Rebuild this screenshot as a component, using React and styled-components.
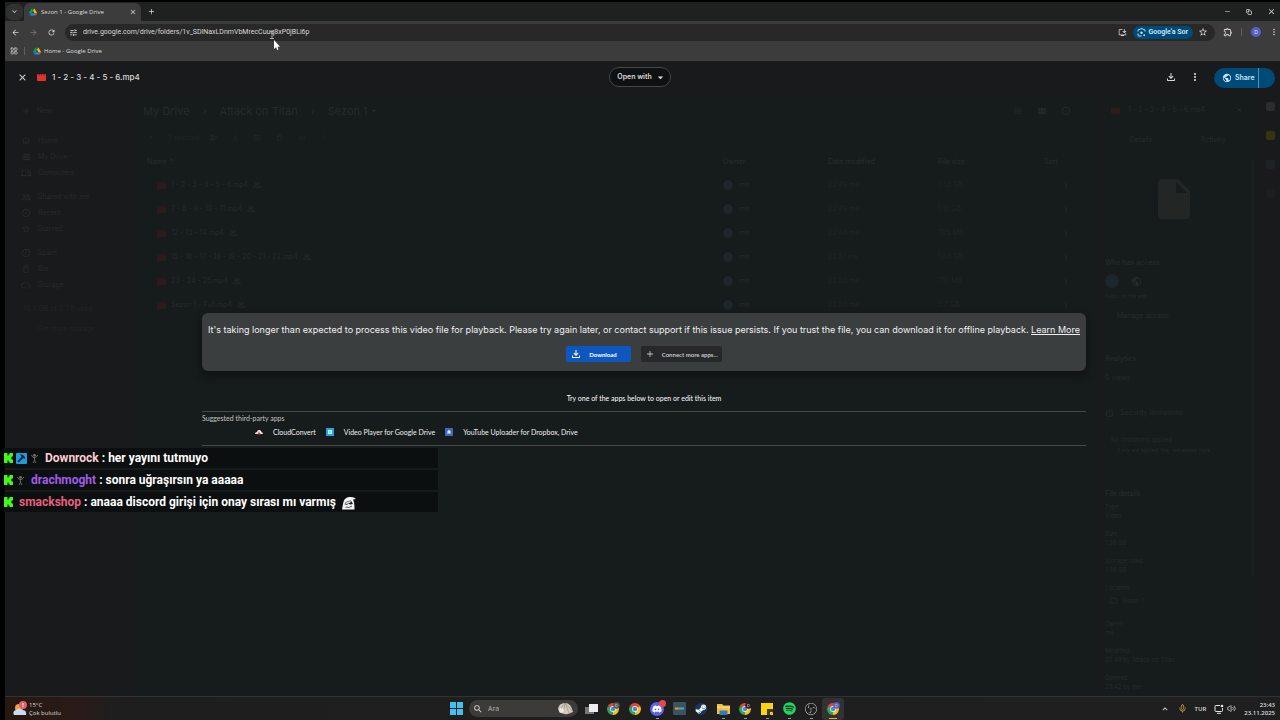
import React from "react";
import styled, { createGlobalStyle, css } from "styled-components";
import {
  MdAdd,
  MdArrowBack,
  MdArrowDropDown,
  MdArrowForward,
  MdClose,
  MdDeleteOutline,
  MdDriveFileMoveOutline,
  MdErrorOutline,
  MdInfoOutline,
  MdInsertDriveFile,
  MdKeyboardArrowDown,
  MdKeyboardArrowUp,
  MdLink,
  MdMenu,
  MdMoreVert,
  MdOutlineCloud,
  MdOutlineDevices,
  MdOutlineExtension,
  MdOutlineFileDownload,
  MdOutlineFolder,
  MdOutlineHome,
  MdOutlineInstallDesktop,
  MdOutlinePeopleAlt,
  MdOutlineStorage,
  MdPersonAddAlt1,
  MdPublic,
  MdRefresh,
  MdSchedule,
  MdSearch,
  MdStarBorder,
  MdTune,
  MdViewModule,
} from "react-icons/md";
import { FaDiscord, FaSpotify, FaSteamSymbol } from "react-icons/fa";
import { SiObsstudio } from "react-icons/si";
import { Copy, LayoutGrid, Mic, Minus, Volume2 } from "lucide-react";

const colors = {
  strip: "#1f2121",
  toolbar: "#3c3c3c",
  omnibox: "#282828",
  page: "#181a1b",
  panel: "#161b1b",
  faint: "#272b2c",
  fainter: "#212627",
  faintRed: "#2e1b1c",
  blue: "#004a77",
};

const fonts = {
  system: `"Open Sans", "Noto Sans", sans-serif`,
  drive: `Inter, "Liberation Sans", sans-serif`,
  compact: `Lato, "Liberation Sans", sans-serif`,
  button: `"Liberation Sans", Arial, sans-serif`,
  chat: `Roboto, "Liberation Sans", sans-serif`,
};

const navGroups = [
  [
    [MdOutlineHome, "Home"],
    [MdOutlineStorage, "My Drive"],
    [MdOutlineDevices, "Computers"],
  ],
  [
    [MdOutlinePeopleAlt, "Shared with me"],
    [MdSchedule, "Recent"],
    [MdStarBorder, "Starred"],
  ],
  [
    [MdErrorOutline, "Spam"],
    [MdDeleteOutline, "Bin"],
    [MdOutlineCloud, "Storage"],
  ],
];

const files = [
  ["1 - 2 - 3 - 4 - 5 - 6.mp4", "22:49 me", "1.38 GB"],
  ["7 - 8 - 9 - 10 - 11.mp4", "22:49 me", "1.15 GB"],
  ["12 - 13 - 14.mp4", "22:48 me", "705 MB"],
  ["15 - 16 - 17 - 18 - 19 - 20 - 21 - 22.mp4", "22:51 me", "1.84 GB"],
  ["23 - 24 - 25.mp4", "22:50 me", "710 MB"],
  ["Sezon 1 - Full.mp4", "22:50 me", "5.7 GB"],
];

const details = [
  ["Type", "Video"],
  ["Size", "1.38 GB"],
  ["Storage used", "1.38 GB"],
];

const laterDetails = [
  ["Owner", "me"],
  ["Modified", "22:49 by Attack on Titan"],
  ["Opened", "23:42 by me"],
];

const messages = [
  { user: "Downrock", color: "#ffccd5", pick: true, sprite: true, text: "her yayını tutmuyo" },
  { user: "drachmoght", color: "#a35bea", sprite: true, text: "sonra uğraşırsın ya aaaaa" },
  {
    user: "smackshop",
    color: "#e9607c",
    text: "anaaa discord girişi için onay sırası mı varmış",
    emote: true,
  },
];

const DriveLogo = ({ size = 9 }) => (
  <svg width={size} height={size} viewBox="0 0 87.3 78" aria-hidden="true">
    <path
      d="m6.6 66.85 3.85 6.65c.8 1.4 1.95 2.5 3.3 3.3l13.75-23.8h-27.5c0 1.55.4 3.1 1.2 4.5z"
      fill="#0066da"
    />
    <path
      d="m43.65 25-13.75-23.8c-1.35.8-2.5 1.9-3.3 3.3l-25.4 44a9.06 9.06 0 0 0 -1.2 4.5h27.5z"
      fill="#00ac47"
    />
    <path
      d="m73.55 76.8c1.35-.8 2.5-1.9 3.3-3.3l1.6-2.75 7.65-13.25c.8-1.4 1.2-2.95 1.2-4.5h-27.5l5.85 11.5z"
      fill="#ea4335"
    />
    <path
      d="m43.65 25 13.75-23.8c-1.35-.8-2.9-1.2-4.5-1.2h-18.5c-1.6 0-3.15.45-4.5 1.2z"
      fill="#00832d"
    />
    <path
      d="m59.8 53h-32.3l-13.75 23.8c1.35.8 2.9 1.2 4.5 1.2h50.8c1.6 0 3.15-.45 4.5-1.2z"
      fill="#2684fc"
    />
    <path
      d="m73.4 26.5-12.7-22c-.8-1.4-1.95-2.5-3.3-3.3l-13.75 23.8 16.15 28h27.45c0-1.55-.4-3.1-1.2-4.5z"
      fill="#ffba00"
    />
  </svg>
);

const VideoIcon = ({ color = "#e0352b", notch = "#181a1b" }) => (
  <svg width="9" height="9" viewBox="0 0 9 9" aria-hidden="true">
    <rect y="1" width="9" height="7" rx="1" fill={color} />
    <path d="M2 1v1.4M4.5 1v1.4M7 1v1.4" stroke={notch} strokeWidth="0.8" />
  </svg>
);

const ChromeIcon = ({ badge }) => (
  <svg width="14" height="14" viewBox="0 0 14 14" aria-hidden="true">
    <path d="M7 7 1.8 4A6 6 0 0 1 12.2 4z" fill="#e94335" />
    <path d="M7 7 12.2 4A6 6 0 0 1 7 13z" fill="#fbc116" />
    <path d="M7 7v6A6 6 0 0 1 1.8 4z" fill="#34a353" />
    <circle cx="7" cy="7" r="2.9" fill="#f3f3f3" />
    <circle cx="7" cy="7" r="2.2" fill="#4285f4" />
    {badge && <circle cx="10.5" cy="3.5" r="3.2" fill={badge} />}
    {badge && <path d="M9.5 2.2v2.6q2.2 0 2.2-1.3T9.5 2.2" fill="none" stroke="#bbb" strokeWidth="0.6" />}
  </svg>
);

const KickBadge = () => (
  <svg width="9" height="10" viewBox="0 0 9 10" aria-hidden="true">
    <path d="M0 0h3.5v2.5h1V1.2h1V0H9v3.5H7.8v1H7v1h.8v1H9V10H5.5V8.8h-1V7.5h-1V10H0z" fill="#45f51d" />
  </svg>
);

const PickBadge = () => (
  <svg width="11" height="11" viewBox="0 0 11 11" aria-hidden="true">
    <rect width="11" height="11" rx="1" fill="#1f9be0" />
    <path d="M4 1.6Q8.500 1 9.300 6.200L7.700 4.900 6.300 6 2.600 9.600 1.300 8.300 5 4.700 5.500 3.300z" fill="#0b2437" />
  </svg>
);

const SpriteBadge = () => (
  <svg width="9" height="11" viewBox="0 0 9 11" aria-hidden="true">
    <circle cx="4.5" cy="2.3" r="1.4" fill="#77716c" />
    <path d="M1.4 2 3 4.4h3L7.8 2M4.5 4v3.2L3.2 10M4.5 7.2 5.9 10" fill="none" stroke="#6d6762" />
  </svg>
);

const EmoteIcon = () => (
  <svg width="14" height="16" viewBox="0 0 14 16" aria-hidden="true">
    <path d="M0 15.500 1 10Q1.500 4 7 3q5-.6 7 2l-3 .6q1.600 3 1.500 9.900z" fill="#f4f4f4" />
    <path d="M2.500 10.300Q3.500 7 9 6.600L11 10Q8 11 6.600 9.800 5 11.200 2.500 10.300z" fill="#202020" />
    <path d="M3.500 13q3.500 1.500 6.500-1" stroke="#333" strokeWidth=".8" fill="none" />
    <path d="M3 10.200Q5 7 9.600 7.400L7 9.300z" fill="#f4f4f4" />
  </svg>
);

const GoogleLens = () => (
  <svg width="9" height="9" viewBox="0 0 9 9" fill="none" stroke="#c2e7ff" aria-hidden="true">
    <path d="M1 3.500V2.500Q1 1.500 2 1.500h1l.6-.8h2l.6.8h.8q1 0 1 1v1M1 5.500V7q0 1 1 1h2.500" />
    <circle cx="4.500" cy="4.700" r="1.200" fill="#c2e7ff" stroke="none" />
    <circle cx="7.200" cy="7.200" r=".9" fill="#c2e7ff" stroke="none" />
  </svg>
);

const NetworkIcon = () => (
  <svg width="10" height="10" viewBox="0 0 10 10" fill="none" stroke="#e4e4e4" aria-hidden="true">
    <path d="M6 1.500H2q-1 0-1 1v4q0 1 1 1h5.500q1 0 1-1V4M3 9.300h4" />
    <circle cx="8" cy="2" r="1.300" fill="#e4e4e4" stroke="none" />
  </svg>
);

const WindowsIcon = () => (
  <svg width="13" height="13" viewBox="0 0 13 13" aria-hidden="true">
    <path d="M0 0h6v6H0zM7 0h6v6H7zM0 7h6v6H0zM7 7h6v6H7z" fill="#43bff0" />
  </svg>
);

const TaskViewIcon = () => (
  <svg width="13" height="12" viewBox="0 0 13 12" aria-hidden="true">
    <rect y="4" width="9" height="7" fill="#777" />
    <rect x="4" y="1" width="9" height="8" fill="#eeeeee" />
  </svg>
);

const ShellIcon = () => (
  <svg width="17" height="13" viewBox="0 0 17 13" aria-hidden="true">
    <path d="M1 7Q2 1 8 1q6 0 8 9l-5 2Q3 13 1 7z" fill="#d3cabd" />
    <path d="M8 1 6 12M8 1l4 10M8 1 2 9M8 1l7 8" stroke="#958b7c" strokeWidth=".6" />
    <circle cx="4.500" cy="8.500" r="2.500" fill="#eee6d8" />
  </svg>
);

const DiscordIcon = () => (
  <BadgeHolder>
    <svg width="14" height="14" viewBox="0 0 14 14" aria-hidden="true">
      <circle cx="7" cy="7" r="7" fill="#5865f2" />
      <FaDiscord x="2" y="2" size={10} color="#ffffff" />
    </svg>
    <RedBadge />
  </BadgeHolder>
);

const DeckIcon = () => (
  <svg width="13" height="13" viewBox="0 0 13 13" aria-hidden="true">
    <rect width="13" height="13" rx="1" fill="#3b5361" />
    <path d="M2 6.500h3" stroke="#e79a3b" strokeWidth="2" />
    <path d="M5 6.500h3" stroke="#57b86b" strokeWidth="2" />
    <path d="M8 6.500h3" stroke="#4aa3df" strokeWidth="2" />
  </svg>
);

const SteamIcon = () => (
  <svg width="12" height="12" viewBox="0 0 12 12" aria-hidden="true">
    <circle cx="6" cy="6" r="6" fill="#14395f" />
    <FaSteamSymbol x="0" y="0" size={12} color="#ffffff" />
  </svg>
);

const FolderIcon = () => (
  <svg width="13" height="12" viewBox="0 0 13 12" aria-hidden="true">
    <path d="M0 1h5l1.500 1.500H13V11H0z" fill="#f5bf42" />
    <path d="M0 3.500h13V5H0z" fill="#ffd975" />
    <path d="M2.500 7.500h8V12h-8z" fill="#2c7cc4" />
  </svg>
);

const NotesIcon = () => (
  <svg width="12" height="12" viewBox="0 0 12 12" aria-hidden="true">
    <path d="M0 0h12v12H0z" fill="#fcd116" />
    <path d="M6 6h6v3l-3 3H6z" fill="#413c26" />
    <path d="M9 12V9h3z" fill="#fcd116" />
  </svg>
);

const WeatherIcon = () => (
  <svg width="14" height="15" viewBox="0 0 14 15" aria-hidden="true">
    <circle cx="6" cy="7" r="4" fill="#efa23b" />
    <path d="M1 14q-2-4 2-5 3-3 6 0 5 0 4 5z" fill="#c7dcf4" />
    <circle cx="10" cy="4" r="4" fill="#e0606a" />
    <path d="M10 2v2.500M10 5.300v.9" stroke="#fff" />
  </svg>
);

const taskbarApps = [
  { name: "Task view", icon: <TaskViewIcon /> },
  { name: "Chrome profile", icon: <ChromeIcon badge="#4b5b50" /> },
  { name: "Chrome", icon: <ChromeIcon /> },
  { name: "Discord", icon: <DiscordIcon />, open: true },
  { name: "Deck", icon: <DeckIcon /> },
  { name: "Steam", icon: <SteamIcon /> },
  { name: "Files", icon: <FolderIcon />, open: true },
  { name: "Chrome stream", icon: <ChromeIcon badge="#201c1c" />, open: true },
  { name: "Sticky notes", icon: <NotesIcon />, open: true },
  { name: "Spotify", icon: <FaSpotify size={13} color="#1ed760" />, open: true },
  { name: "OBS", icon: <SiObsstudio size={12} color="#c9c9c9" />, open: true },
  { name: "Chrome drive", icon: <ChromeIcon badge="#5661c4" />, active: true },
];

const App = () => (
  <Screen>
    <GlobalStyle />
    <BrowserChrome />
    <DrivePage>
      <DriveBackground />
      <Viewer />
    </DrivePage>
    <Taskbar />
    <Chat />
    <Cursor width="11" height="20" viewBox="0 0 11 20" aria-hidden="true">
      <path d="M0 .5h4M2 .5v7M0 7.500h4" stroke="#a9a9a9" fill="none" />
      <path d="M4 9v9l2-1.800L7.300 19l1.200-.5L7.500 15.800H10z" fill="#ffffff" />
    </Cursor>
  </Screen>
);

const BrowserChrome = () => (
  <header>
    <TabStrip>
      <IconButton $round aria-label="Search tabs">
        <MdKeyboardArrowDown size={9} />
      </IconButton>
      <Tab>
        <DriveLogo size={8} />
        <TabTitle>Sezon 1 - Google Drive</TabTitle>
        <IconButton $small aria-label="Close tab">
          <MdClose size={8} />
        </IconButton>
      </Tab>
      <IconButton aria-label="New tab">
        <MdAdd size={9} />
      </IconButton>
      <WindowControls>
        <IconButton aria-label="Minimize">
          <Minus size={7} />
        </IconButton>
        <IconButton aria-label="Restore">
          <Copy size={6} strokeWidth={3} />
        </IconButton>
        <IconButton aria-label="Close window">
          <MdClose size={9} />
        </IconButton>
      </WindowControls>
    </TabStrip>
    <Toolbar>
      <IconButton aria-label="Back">
        <MdArrowBack size={9} />
      </IconButton>
      <IconButton $dim aria-label="Forward">
        <MdArrowForward size={9} />
      </IconButton>
      <IconButton aria-label="Reload">
        <MdRefresh size={9} />
      </IconButton>
      <Omnibox>
        <IconButton $small aria-label="Site information">
          <MdTune size={9} />
        </IconButton>
        <Url
          aria-label="Address"
          defaultValue="drive.google.com/drive/folders/1v_SDlNaxLDnmVbMrecCuuq8xP0jBLi6p"
        />
        <IconButton $small aria-label="Install">
          <MdOutlineInstallDesktop size={9} />
        </IconButton>
        <LensButton>
          <GoogleLens />
          Google'a Sor
        </LensButton>
        <IconButton $small aria-label="Bookmark">
          <MdStarBorder size={10} />
        </IconButton>
      </Omnibox>
      <IconButton aria-label="Extensions">
        <MdOutlineExtension size={10} />
      </IconButton>
      <Separator />
      <Profile aria-label="Profile">D</Profile>
      <IconButton $small aria-label="Menu">
        <MdMoreVert size={10} />
      </IconButton>
    </Toolbar>
    <BookmarkBar>
      <IconButton $small aria-label="Apps">
        <LayoutGrid size={8} />
      </IconButton>
      <Separator />
      <Bookmark href="#home">
        <DriveLogo size={8} />
        Home - Google Drive
      </Bookmark>
    </BookmarkBar>
  </header>
);

const DriveBackground = () => (
  <Background>
    <Sidebar>
      <NewButton>
        <MdAdd size={10} /> New
      </NewButton>
      {navGroups.map((group, i) => (
        <NavGroup key={i}>
          {group.map(([Icon, label]) => (
            <NavLink href="#nav" key={label}>
              <Icon size={10} /> {label}
            </NavLink>
          ))}
        </NavGroup>
      ))}
      <StorageText>10.4 GB of 2 TB used</StorageText>
      <StorageText $indent>Get more storage</StorageText>
    </Sidebar>
    <Main>
      <Breadcrumbs>
        <span>My Drive</span>
        <Chevron>›</Chevron>
        <span>Attack on Titan</span>
        <Chevron>›</Chevron>
        <Crumb>
          Sezon 1 <MdArrowDropDown size={12} />
        </Crumb>
        <ViewIcons>
          <MdMenu size={10} />
          <MdViewModule size={10} />
          <MdInfoOutline size={10} />
        </ViewIcons>
      </Breadcrumbs>
      <Selection>
        <MdClose size={8} />
        <SelectionText>1 selected</SelectionText>
        <MdPersonAddAlt1 size={9} />
        <MdOutlineFileDownload size={9} />
        <MdDriveFileMoveOutline size={9} />
        <MdDeleteOutline size={9} />
        <MdLink size={9} />
        <MdMoreVert size={9} />
      </Selection>
      <FileTable>
        <thead>
          <tr>
            <HeadCell>Name ↑</HeadCell>
            <HeadCell $width={105}>Owner</HeadCell>
            <HeadCell $width={110}>Date modified</HeadCell>
            <HeadCell $width={106}>File size</HeadCell>
            <HeadCell $width={37}>Sort</HeadCell>
          </tr>
        </thead>
        <tbody>
          {files.map(([name, date, size]) => (
            <tr key={name}>
              <Cell>
                <FileName>
                  <VideoIcon color={colors.faintRed} notch={colors.panel} />
                  {name}
                  <MdOutlinePeopleAlt size={8} />
                </FileName>
              </Cell>
              <Cell>
                <Owner>
                  <OwnerDot />
                  me
                </Owner>
              </Cell>
              <Cell $dim>{date}</Cell>
              <Cell $dim>{size}</Cell>
              <Cell $end>
                <MdMoreVert size={8} />
              </Cell>
            </tr>
          ))}
        </tbody>
      </FileTable>
    </Main>
    <Details>
      <DetailsHead>
        <VideoIcon color={colors.faintRed} notch={colors.panel} />
        <DetailsTitle>1 - 2 - 3 - 4 - 5 - 6.mp4</DetailsTitle>
        <MdClose size={8} />
      </DetailsHead>
      <DetailsTabs>
        <span>Details</span>
        <span>Activity</span>
      </DetailsTabs>
      <Preview>
        <MdInsertDriveFile size={48} />
      </Preview>
      <DetailsHeading>Who has access</DetailsHeading>
      <Avatars>
        <AvatarDot />
        <MdPublic size={11} />
      </Avatars>
      <AccessNote>Public on the web</AccessNote>
      <ManageAccess>Manage access</ManageAccess>
      <DetailsHeading>Analytics</DetailsHeading>
      <Views>0 views</Views>
      <Security>
        <MdErrorOutline size={9} /> Security limitations
      </Security>
      <Limits>
        No limitations applied
        <LimitNote>If any are applied, they will appear here</LimitNote>
      </Limits>
      <DetailsHeading>File details</DetailsHeading>
      <DetailList>
        {details.map(([term, value]) => (
          <Detail key={term}>
            <dt>{term}</dt>
            <dd>{value}</dd>
          </Detail>
        ))}
        <Detail $tall>
          <dt>Location</dt>
          <LocationChip>
            <MdOutlineFolder size={9} /> Sezon 1
          </LocationChip>
        </Detail>
        {laterDetails.map(([term, value]) => (
          <Detail key={term}>
            <dt>{term}</dt>
            <dd>{value}</dd>
          </Detail>
        ))}
      </DetailList>
    </Details>
    <Scrollbar />
    <Rail>
      <RailDot $color="#2b2e2f" />
      <RailDot $color="#34350f" />
      <RailDot $color="#1d2225" />
      <RailDot $color="#1c1f20" />
    </Rail>
  </Background>
);

const Viewer = () => (
  <ViewerLayer>
    <ViewerBar>
      <ViewerTitle>
        <IconButton aria-label="Close viewer">
          <MdClose size={11} />
        </IconButton>
        <VideoIcon />
        <h1>1 - 2 - 3 - 4 - 5 - 6.mp4</h1>
      </ViewerTitle>
      <OpenWith>
        Open with <MdArrowDropDown size={13} />
      </OpenWith>
      <ViewerActions>
        <IconButton $large aria-label="Download">
          <MdOutlineFileDownload size={12} />
        </IconButton>
        <IconButton $large aria-label="More actions">
          <MdMoreVert size={12} />
        </IconButton>
        <Share>
          <ShareMain>
            <MdPublic size={10} /> Share
          </ShareMain>
          <ShareMore aria-label="Share options" />
        </Share>
      </ViewerActions>
    </ViewerBar>
    <ViewerBody>
      <Notice>
        <p>
          It's taking longer than expected to process this video file for playback. Please try
          again later, or contact support if this issue persists. If you trust the file, you can
          download it for offline playback. <LearnMore href="#help">Learn More</LearnMore>
        </p>
        <NoticeActions>
          <NoticeButton $primary>
            <MdOutlineFileDownload size={12} />
            <NoticeLabel>Download</NoticeLabel>
          </NoticeButton>
          <NoticeButton>
            <MdAdd size={10} />
            <NoticeLabel>Connect more apps...</NoticeLabel>
          </NoticeButton>
        </NoticeActions>
      </Notice>
      <TryText>Try one of the apps below to open or edit this item</TryText>
      <Suggested>
        <SuggestedTitle>Suggested third-party apps</SuggestedTitle>
        <SuggestedApps>
          <AppLink href="#cloudconvert">
            <svg width="8" height="8" viewBox="0 0 8 8" aria-hidden="true">
              <path d="M0 6q0-2 2-2 .5-2.500 2.500-2T6.500 4Q8 4.500 8 6z" fill="#f3dede" />
              <path d="M2 6.500 4 4l2 2.500z" fill="#b9434c" />
            </svg>
            CloudConvert
          </AppLink>
          <AppLink href="#videoplayer">
            <svg width="8" height="8" viewBox="0 0 8 8" aria-hidden="true">
              <path d="M0 0h8v8H0z" fill="#24a5dd" />
              <path d="M2 2h4v4H2z" fill="#d5f2ff" />
              <path d="M3.500 3v2l1.500-1z" fill="#24a5dd" />
            </svg>
            Video Player for Google Drive
          </AppLink>
          <AppLink href="#uploader">
            <svg width="8" height="8" viewBox="0 0 8 8" aria-hidden="true">
              <path d="M0 0h8v8H0z" fill="#3e68bd" />
              <path d="M4 1.800 6 4H5.200l1 1.500H1.800L2.800 4H2z" fill="#e6ecf8" />
            </svg>
            YouTube Uploader for Dropbox, Drive
          </AppLink>
        </SuggestedApps>
      </Suggested>
    </ViewerBody>
  </ViewerLayer>
);

const Chat = () => (
  <ChatList>
    {messages.map(message => (
      <Message key={message.user}>
        <KickBadge />
        {message.pick && <PickBadge />}
        {message.sprite && <SpriteBadge />}
        <p>
          <UserName $color={message.color}>{message.user}</UserName> : {message.text}
        </p>
        {message.emote && <EmoteIcon />}
      </Message>
    ))}
  </ChatList>
);

const Taskbar = () => (
  <Bar>
    <Weather>
      <WeatherIcon />
      <div>
        <p>15°C</p>
        <p>Çok bulutlu</p>
      </div>
    </Weather>
    <BarApps>
      <BarButton aria-label="Start">
        <WindowsIcon />
      </BarButton>
      <BarSearch>
        <MdSearch size={10} />
        <BarInput aria-label="Ara" placeholder="Ara" />
        <ShellIcon />
      </BarSearch>
      {taskbarApps.map(({ name, icon, open, active }) => (
        <BarButton key={name} aria-label={name} $open={open} $active={active}>
          {icon}
        </BarButton>
      ))}
    </BarApps>
    <Tray>
      <MdKeyboardArrowUp size={10} />
      <Mic size={9} color="#d9a43b" />
      <span>TUR</span>
      <TrayGroup>
        <NetworkIcon />
        <Volume2 size={9} />
      </TrayGroup>
      <Clock>
        <p>23:43</p>
        <p>23.11.2025</p>
      </Clock>
    </Tray>
  </Bar>
);

const GlobalStyle = createGlobalStyle`
  * {
    box-sizing: border-box;
  }
  body {
    margin: 0;
    background: #000000;
  }
  h1, p, dl, dd, ul {
    margin: 0;
    padding: 0;
  }
  button, input {
    border: 0;
    padding: 0;
    margin: 0;
    background: none;
    color: inherit;
    font: inherit;
    outline: none;
  }
  a {
    color: inherit;
    text-decoration: none;
  }
  svg {
    flex: none;
    display: block;
  }
`;

const row = css`
  display: flex;
  align-items: center;
`;

const Screen = styled.div`
  position: relative;
  display: flex;
  flex-direction: column;
  height: 100vh;
  padding: 2px 0 0 5px;
  overflow: hidden;
  color: #dcdcdc;
  font: 7px/10px ${fonts.system};
`;

const IconButton = styled.button`
  ${row}
  justify-content: center;
  flex: none;
  width: ${p => (p.$small ? 12 : p.$large ? 24 : 18)}px;
  height: 16px;
  color: ${p => (p.$dim ? "#777777" : "#d6d6d6")};
  ${p => p.$round && "width: 17px; border-radius: 6px; background: #303131;"}
`;

const TabStrip = styled.div`
  ${row}
  height: 19px;
  padding: 0 0 0 1px;
  background: ${colors.strip};
`;

const Tab = styled.div`
  ${row}
  align-self: stretch;
  gap: 4px;
  width: 117px;
  margin: 1px 1px 0 1px;
  padding: 0 2px 0 5px;
  border-radius: 6px 6px 0 0;
  background: ${colors.toolbar};
`;

const TabTitle = styled.span`
  flex: 1;
  font-size: 6px;
  white-space: nowrap;
`;

const WindowControls = styled.div`
  ${row}
  gap: 4px;
  margin-left: auto;
`;

const Toolbar = styled.div`
  ${row}
  height: 22px;
  padding: 0 0 0 1px;
  background: ${colors.toolbar};
`;

const Omnibox = styled.div`
  ${row}
  flex: 1;
  gap: 4px;
  height: 17px;
  margin: 0 4px 0 5px;
  padding: 0 6px 0 2px;
  border-radius: 9px;
  background: ${colors.omnibox};
`;

const Url = styled.input`
  flex: 1;
  min-width: 0;
  color: #d8d8d8;
  font-family: ${fonts.chat};
`;

const LensButton = styled.button`
  ${row}
  gap: 3px;
  height: 13px;
  padding: 0 5px 0 4px;
  border-radius: 7px;
  background: ${colors.blue};
  color: #d4ecfb;
  font-family: ${fonts.chat};
  font-weight: 600;
`;

const Separator = styled.span`
  width: 1px;
  height: 8px;
  margin: 0 4px;
  background: #606060;
`;

const Profile = styled.button`
  width: 10px;
  height: 10px;
  margin: 0 7px 0 5px;
  border-radius: 50%;
  background: #5661c4;
  color: #e8e8ff;
  font-size: 5px;
  line-height: 10px;
`;

const BookmarkBar = styled.nav`
  ${row}
  height: 18px;
  padding: 0 3px 2px;
  border-bottom: 1px solid #414141;
  background: ${colors.toolbar};
`;

const Bookmark = styled.a`
  ${row}
  gap: 3px;
  margin-left: 4px;
  font-size: 6px;
`;

const DrivePage = styled.div`
  position: relative;
  flex: 1;
  display: flex;
  min-height: 0;
  overflow: hidden;
  background: ${colors.page};
  font-family: ${fonts.drive};
`;

const Background = styled.div`
  flex: 1;
  display: flex;
  padding-top: 34px;
  color: ${colors.faint};
`;

const Sidebar = styled.nav`
  width: 130px;
  padding-left: 16px;
`;

const NewButton = styled.button`
  ${row}
  gap: 6px;
  height: 32px;
  margin-bottom: 6px;
`;

const NavGroup = styled.div`
  margin-bottom: 8px;
`;

const NavLink = styled.a`
  ${row}
  gap: 7px;
  height: 16px;
`;

const StorageText = styled.p`
  height: 20px;
  padding: 3px 0 0 ${p => (p.$indent ? 16 : 2)}px;
  color: ${colors.fainter};
`;

const Main = styled.main`
  flex: 1;
  min-width: 0;
  padding: 4px 18px 0 8px;
  border-radius: 8px;
  background: ${colors.panel};
`;

const Breadcrumbs = styled.div`
  ${row}
  height: 24px;
  font-size: 11px;
  line-height: 16px;
`;

const Chevron = styled.span`
  width: 30px;
  text-align: center;
`;

const Crumb = styled.span`
  ${row}
`;

const ViewIcons = styled.div`
  ${row}
  gap: 14px;
  margin: 0 6px 0 auto;
`;

const Selection = styled.div`
  ${row}
  gap: 13px;
  height: 28px;
  padding-left: 4px;
  color: ${colors.fainter};
`;

const SelectionText = styled.span`
  width: 28px;
  font-family: ${fonts.compact};
  white-space: nowrap;
`;

const FileTable = styled.table`
  width: 100%;
  table-layout: fixed;
  border-collapse: collapse;
`;

const HeadCell = styled.th`
  width: ${p => (p.$width ? `${p.$width}px` : "auto")};
  height: 22px;
  padding: 0 0 0 4px;
  text-align: left;
  font-weight: 500;
`;

const Cell = styled.td`
  height: 24px;
  padding: 0 0 0 4px;
  color: ${p => (p.$dim ? colors.fainter : colors.faint)};
  svg {
    margin-left: ${p => (p.$end ? "18px" : "0")};
  }
`;

const FileName = styled.div`
  ${row}
  gap: 5px;
  padding-left: 10px;
`;

const Owner = styled.div`
  ${row}
  gap: 6px;
`;

const OwnerDot = styled.span`
  width: 10px;
  height: 10px;
  border-radius: 50%;
  background: #1e252b;
`;

const Details = styled.aside`
  width: 152px;
  margin-left: 8px;
  padding-left: 2px;
  background: ${colors.panel};
`;

const DetailsHead = styled.div`
  ${row}
  gap: 8px;
  height: 30px;
  padding: 0 12px 0 6px;
`;

const DetailsTitle = styled.span`
  flex: 1;
`;

const DetailsTabs = styled.div`
  display: grid;
  grid-template-columns: 1fr 1fr;
  height: 46px;
  padding: 10px 6px 0 0;
  text-align: center;
`;

const Preview = styled.div`
  display: flex;
  justify-content: center;
  height: 86px;
  padding: 4px 12px 0 0;
  color: #222625;
`;

const DetailsHeading = styled.h2`
  margin: 0;
  height: 14px;
  font-size: 7px;
  font-weight: 500;
  line-height: 12px;
`;

const Avatars = styled.div`
  ${row}
  gap: 12px;
  height: 20px;
`;

const AvatarDot = styled.span`
  width: 14px;
  height: 14px;
  border-radius: 50%;
  background: #1b272d;
`;

const AccessNote = styled.p`
  height: 20px;
  font-size: 5px;
`;

const ManageAccess = styled.button`
  display: block;
  height: 10px;
  margin: 0 0 32px 12px;
`;

const Views = styled.p`
  height: 40px;
  padding-top: 6px;
`;

const Security = styled.div`
  ${row}
  gap: 6px;
  height: 12px;
  margin-bottom: 16px;
`;

const Limits = styled.div`
  height: 53px;
  padding-left: 6px;
  font-size: 6px;
`;

const LimitNote = styled.p`
  padding-left: 6px;
  font-size: 5px;
`;

const DetailList = styled.dl`
  font-size: 6px;
  line-height: 9px;
`;

const Detail = styled.div`
  height: ${p => (p.$tall ? 36 : 27)}px;
`;

const LocationChip = styled.dd`
  ${row}
  gap: 4px;
  padding: 4px 0 0 4px;
`;

const Scrollbar = styled.span`
  width: 3px;
  height: 418px;
  margin: 64px 0 0 -4px;
  background: #1a1e1e;
`;

const Rail = styled.div`
  display: flex;
  flex-direction: column;
  gap: 20px;
  width: 26px;
  padding: 7px 0 0 12px;
`;

const RailDot = styled.span`
  width: 9px;
  height: 9px;
  border-radius: 2px;
  background: ${p => p.$color};
`;

const ViewerLayer = styled.div`
  position: absolute;
  inset: 0;
  display: flex;
  flex-direction: column;
`;

const ViewerBar = styled.div`
  display: grid;
  grid-template-columns: 1fr auto 1fr;
  align-items: center;
  height: 32px;
  padding: 0 5px 0 0;
`;

const ViewerTitle = styled.div`
  ${row}
  gap: 6px;
  padding-left: 8px;
  h1 {
    font-size: 8px;
    font-weight: 500;
  }
`;

const OpenWith = styled.button`
  ${row}
  gap: 2px;
  height: 20px;
  padding: 0 3px 0 7px;
  border: 1px solid #444746;
  border-radius: 10px;
  background: #0e1111;
  font-weight: 600;
`;

const ViewerActions = styled.div`
  ${row}
  justify-content: flex-end;
`;

const Share = styled.div`
  display: flex;
  height: 20px;
  margin: 1px 0 0 7px;
  overflow: hidden;
  border-radius: 10px;
  background: ${colors.blue};
  color: #c2e7ff;
`;

const ShareMain = styled.button`
  ${row}
  gap: 3px;
  width: 45px;
  padding-left: 8px;
  border-right: 1px solid #5f8fae;
  font-weight: 600;
`;

const ShareMore = styled.button`
  width: 16px;
`;

const ViewerBody = styled.div`
  flex: 1;
  display: flex;
  flex-direction: column;
  justify-content: center;
  padding: 0 194px 30px 197px;
  font-family: ${fonts.compact};
`;

const Notice = styled.section`
  padding: 10px 2px 9px;
  border-radius: 6px;
  background: #3b3e3f;
  box-shadow: 0 4px 10px rgba(0, 0, 0, 0.4);
  color: #f0f0f0;
  font-family: ${fonts.drive};
  font-size: 9px;
  line-height: 13px;
  text-align: center;
`;

const LearnMore = styled.a`
  text-decoration: underline;
`;

const NoticeActions = styled.div`
  display: flex;
  justify-content: center;
  gap: 10px;
  margin-top: 10px;
`;

const NoticeButton = styled.button`
  ${row}
  height: 16px;
  padding: 0 ${p => (p.$primary ? 14 : 4)}px 0 4px;
  border-radius: 2px;
  background: ${p => (p.$primary ? "#0f57c0" : "#262829")};
  color: ${p => (p.$primary ? "#ffffff" : "#c4c6c7")};
  font-family: ${fonts.compact};
  font-size: 6px;
  font-weight: 700;
`;

const NoticeLabel = styled.span`
  margin-left: 7px;
`;

const TryText = styled.p`
  margin: 22px 0 8px;
  color: #ffffff;
  text-align: center;
`;

const Suggested = styled.section`
  border-top: 1px solid #484942;
  border-bottom: 1px solid #484942;
`;

const SuggestedTitle = styled.p`
  padding: 1px 0 4px;
  color: #c4c5c5;
`;

const SuggestedApps = styled.div`
  ${row}
  gap: 10px;
  padding: 0 0 8px 53px;
`;

const AppLink = styled.a`
  ${row}
  gap: 10px;
  color: #f0f0f0;
`;

const ChatList = styled.div`
  position: absolute;
  left: 4px;
  bottom: 208px;
  display: flex;
  flex-direction: column;
  gap: 2px;
  width: 434px;
  color: #ffffff;
  font: 700 12px/20px ${fonts.chat};
`;

const Message = styled.div`
  ${row}
  gap: 3px;
  height: 20px;
  background: #0c0f0f;
  white-space: nowrap;
  p {
    padding: 0 3px 0 3px;
  }
`;

const UserName = styled.span`
  color: ${p => p.$color};
`;

const Cursor = styled.svg`
  position: absolute;
  left: 270px;
  top: 31px;
`;

const Bar = styled.footer`
  display: grid;
  grid-template-columns: 1fr auto 1fr;
  align-items: center;
  height: 24px;
  padding-left: 4px;
  border-top: 1px solid #333333;
  background: linear-gradient(90deg, #25180f 0, #2a1a19 70px, #1f1e1e 110px, #1f1f20 100%);
  line-height: 8px;
`;

const Weather = styled.div`
  ${row}
  gap: 2px;
  padding-left: 4px;
  font-size: 6px;
`;

const BarApps = styled.div`
  ${row}
`;

const BarButton = styled.button`
  position: relative;
  ${row}
  justify-content: center;
  width: 22px;
  height: 22px;
  border-radius: 3px;
  background: ${p => (p.$active ? "#323234" : "none")};
  &:after {
    content: "";
    position: absolute;
    bottom: 1px;
    width: ${p => (p.$active ? 8 : 3)}px;
    height: 1px;
    background: ${p => (p.$active ? "#e2b03c" : p.$open ? "#9a9a9a" : "transparent")};
  }
`;

const BarSearch = styled.div`
  ${row}
  gap: 5px;
  width: 109px;
  height: 17px;
  margin: 0 2px;
  padding: 0 4px;
  border-radius: 9px;
  background: #3d3b3a;
`;

const BarInput = styled.input`
  flex: 1;
  min-width: 0;
  &::placeholder {
    color: #b5b3b1;
    opacity: 1;
  }
`;

const BadgeHolder = styled.span`
  position: relative;
`;

const RedBadge = styled.span`
  position: absolute;
  top: -2px;
  right: -2px;
  width: 7px;
  height: 7px;
  border-radius: 50%;
  background: #e8474c;
`;

const Tray = styled.div`
  ${row}
  justify-content: flex-end;
  gap: 8px;
  padding-right: 5px;
  font-size: 6px;
  font-weight: 600;
`;

const TrayGroup = styled.div`
  ${row}
  gap: 3px;
`;

const Clock = styled.div`
  text-align: right;
`;

export default App;
